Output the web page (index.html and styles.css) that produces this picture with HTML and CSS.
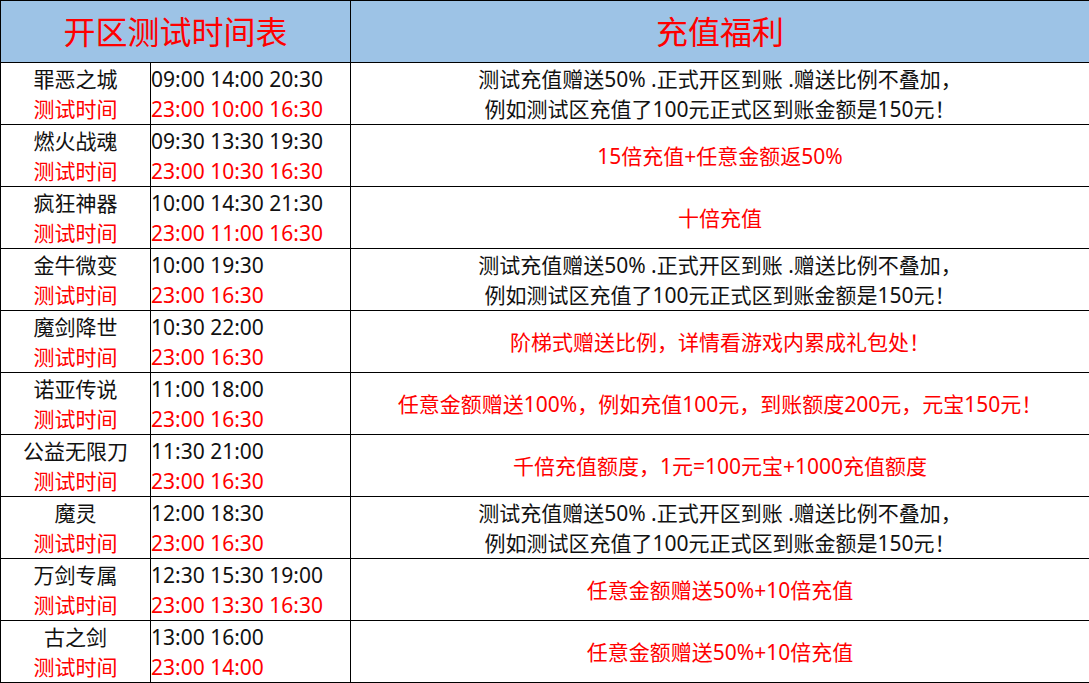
FILE: index.html
```html
<!DOCTYPE html>
<html lang="zh-CN">
<head>
<meta charset="utf-8">
<link rel="stylesheet" href="styles.css">
</head>
<body>
<table class="sched">
  <colgroup>
    <col class="c-name">
    <col class="c-time">
    <col class="c-bonus">
  </colgroup>
  <thead>
    <tr class="head">
      <th colspan="2">开区测试时间表</th>
      <th>充值福利</th>
    </tr>
  </thead>
  <tbody>
    <tr>
      <td class="name">罪恶之城<br><span class="red">测试时间</span></td>
      <td class="time">09:00 14:00 20:30<br><span class="red">23:00 10:00 16:30</span></td>
      <td class="bonus">测试充值赠送50% .正式开区到账 .赠送比例不叠加，<br>例如测试区充值了100元正式区到账金额是150元！</td>
    </tr>
    <tr>
      <td class="name">燃火战魂<br><span class="red">测试时间</span></td>
      <td class="time">09:30 13:30 19:30<br><span class="red">23:00 10:30 16:30</span></td>
      <td class="bonus red">15倍充值+任意金额返50%</td>
    </tr>
    <tr>
      <td class="name">疯狂神器<br><span class="red">测试时间</span></td>
      <td class="time">10:00 14:30 21:30<br><span class="red">23:00 11:00 16:30</span></td>
      <td class="bonus red">十倍充值</td>
    </tr>
    <tr>
      <td class="name">金牛微变<br><span class="red">测试时间</span></td>
      <td class="time">10:00 19:30<br><span class="red">23:00 16:30</span></td>
      <td class="bonus">测试充值赠送50% .正式开区到账 .赠送比例不叠加，<br>例如测试区充值了100元正式区到账金额是150元！</td>
    </tr>
    <tr>
      <td class="name">魔剑降世<br><span class="red">测试时间</span></td>
      <td class="time">10:30 22:00<br><span class="red">23:00 16:30</span></td>
      <td class="bonus red">阶梯式赠送比例，详情看游戏内累成礼包处！</td>
    </tr>
    <tr>
      <td class="name">诺亚传说<br><span class="red">测试时间</span></td>
      <td class="time">11:00 18:00<br><span class="red">23:00 16:30</span></td>
      <td class="bonus red">任意金额赠送100%，例如充值100元，到账额度200元，元宝150元！</td>
    </tr>
    <tr>
      <td class="name">公益无限刀<br><span class="red">测试时间</span></td>
      <td class="time">11:30 21:00<br><span class="red">23:00 16:30</span></td>
      <td class="bonus red">千倍充值额度，1元=100元宝+1000充值额度</td>
    </tr>
    <tr>
      <td class="name">魔灵<br><span class="red">测试时间</span></td>
      <td class="time">12:00 18:30<br><span class="red">23:00 16:30</span></td>
      <td class="bonus">测试充值赠送50% .正式开区到账 .赠送比例不叠加，<br>例如测试区充值了100元正式区到账金额是150元！</td>
    </tr>
    <tr>
      <td class="name">万剑专属<br><span class="red">测试时间</span></td>
      <td class="time">12:30 15:30 19:00<br><span class="red">23:00 13:30 16:30</span></td>
      <td class="bonus red">任意金额赠送50%+10倍充值</td>
    </tr>
    <tr>
      <td class="name">古之剑<br><span class="red">测试时间</span></td>
      <td class="time">13:00 16:00<br><span class="red">23:00 14:00</span></td>
      <td class="bonus red">任意金额赠送50%+10倍充值</td>
    </tr>
  </tbody>
</table>
</body>
</html>
```
FILE: styles.css
```css
html, body {
  margin: 0;
  padding: 0;
  background: #ffffff;
}
body {
  font-family: "Noto Sans", "Noto Sans CJK SC", sans-serif;
  color: #111111;
}
.sched {
  border-collapse: collapse;
  table-layout: fixed;
  width: 1089px;
}
.c-name { width: 150px; }
.c-time { width: 200px; }
.c-bonus { width: 739px; }
.sched th,
.sched td {
  border: 1px solid #000000;
  padding: 0;
  vertical-align: middle;
}
.head th {
  background: #9dc3e6;
  color: #ff0000;
  font-weight: normal;
  font-size: 32px;
  height: 61px;
  text-align: center;
  line-height: 1;
}
.sched td {
  height: 61px;
  font-size: 21px;
  line-height: 30px;
}
.name { text-align: center; }
.time { text-align: left; padding-left: 4px; }
.bonus { text-align: center; }
.red { color: #ff0000; }
```
